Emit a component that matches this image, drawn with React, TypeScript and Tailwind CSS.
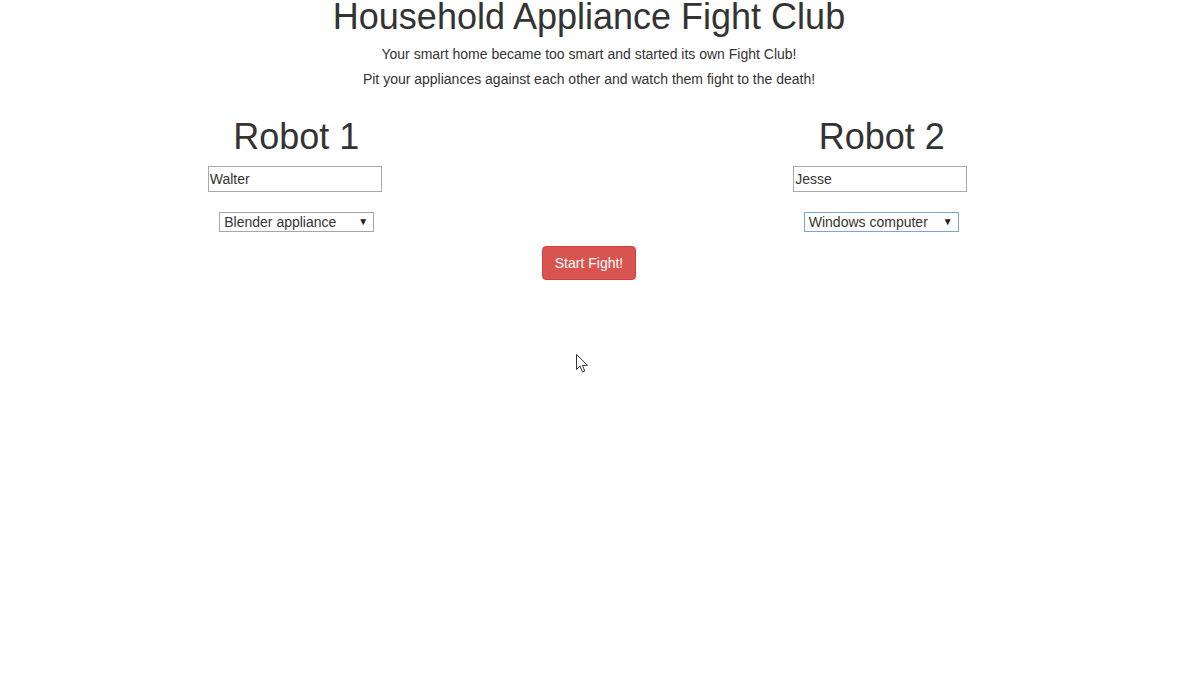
import React from "react";

const font = "font-['Liberation_Sans',Arial,Helvetica,sans-serif]";

const RobotColumn = ({
  title,
  name,
  appliance,
  focused,
}: {
  title: string;
  name: string;
  appliance: string;
  focused?: boolean;
}) => {
  return (
    <div className="flex flex-col items-center">
      <h2 className="pl-[3px] text-[36px] leading-[40px] text-[#333]">{title}</h2>
      <input
        type="text"
        defaultValue={name}
        className="mt-[9px] w-[174px] h-[26px] border border-[#a9a9a9] px-[1px] text-[14px] text-[#333] outline-none"
      />
      <div
        className={
          focused
            ? "relative mt-[20px] w-[155px] h-[20px] border border-[#7ba4dc] bg-white flex items-center ml-[2px]"
            : "relative mt-[20px] w-[155px] h-[20px] border border-[#a6a6a6] bg-white flex items-center ml-[4px]"
        }
      >
        <span className="pl-[4px] text-[14px] leading-[18px] text-[#333]">{appliance}</span>
        <span className="absolute right-[5px] top-[2px] text-[10px] leading-[14px] text-[#222]">▼</span>
      </div>
    </div>
  );
};

export default function App() {
  return (
    <div className={`relative flow-root min-h-[683px] bg-white text-[#333] ${font}`}>
      <div className="w-[1172px] ml-[3px] text-center">
        <h1 className="text-[36px] leading-[34px]">Household Appliance Fight Club</h1>
        <p className="mt-[8px] text-[14px] leading-[25px]">Your smart home became too smart and started its own Fight Club!</p>
        <p className="text-[14px] leading-[25px]">Pit your appliances against each other and watch them fight to the death!</p>
      </div>

      <div className="mt-[25px] w-[1171px] ml-[2px] grid grid-cols-2">
        <RobotColumn title="Robot 1" name="Walter" appliance="Blender appliance" />
        <RobotColumn title="Robot 2" name="Jesse" appliance="Windows computer" focused />
      </div>

      <div className="mt-[14px] w-[1172px] ml-[3px] flex justify-center">
        <button className="w-[94px] h-[34px] rounded-[4px] bg-[#d9534f] border border-[#d43f3a] text-white text-[14px]">
          Start Fight!
        </button>
      </div>

      {/* mouse pointer caught in the screenshot */}
      <svg className="absolute left-[576px] top-[354px]" width="13" height="20" viewBox="0 0 13 20">
        <path d="M0.5 0.5 L0.5 15.5 L4 12 L6.5 18 L8.8 17 L6.4 11.3 L11.5 11.3 Z" fill="white" stroke="#333" strokeWidth="1" />
      </svg>
    </div>
  );
}
